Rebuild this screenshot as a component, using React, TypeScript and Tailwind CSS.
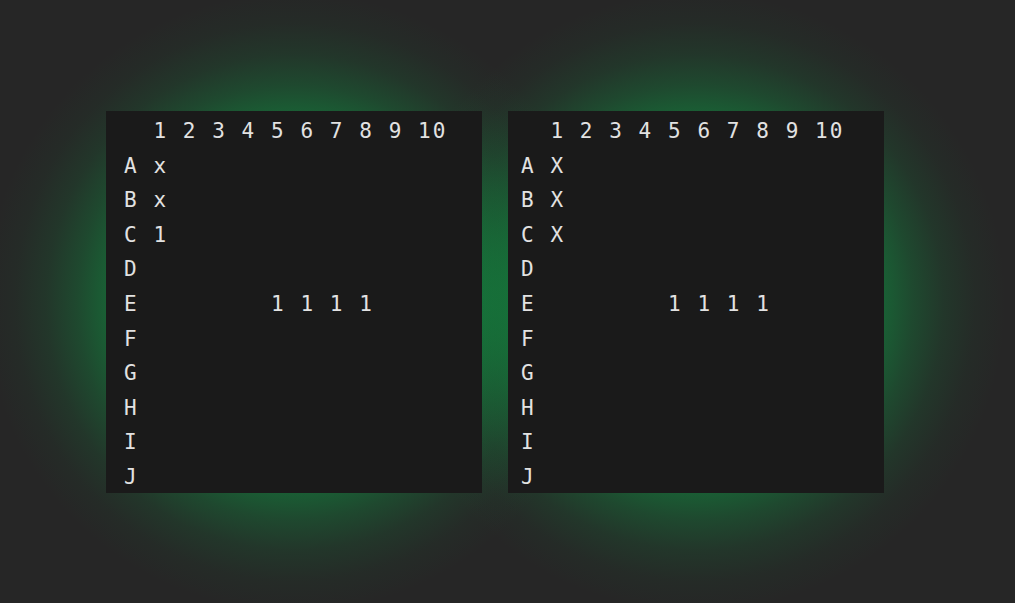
const rows = ['A', 'B', 'C', 'D', 'E', 'F', 'G', 'H', 'I', 'J']

const header = '  1 2 3 4 5 6 7 8 9 10'

function boardLines(marks: Record<string, string>) {
  return [header, ...rows.map((r) => `${r} ${marks[r] ?? ''}`)]
}

const leftBoard = boardLines({ A: 'x', B: 'x', C: '1', E: '        1 1 1 1' })
const rightBoard = boardLines({ A: 'X', B: 'X', C: 'X', E: '        1 1 1 1' })

function Board({ lines, inset }: { lines: string[]; inset: string }) {
  return (
    <div className="relative w-[376px] h-[382px] bg-[#1a1a1a] before:content-[''] before:absolute before:left-1/2 before:top-1/2 before:w-[620px] before:h-[620px] before:-translate-x-1/2 before:-translate-y-1/2 before:-z-10 before:bg-[radial-gradient(circle_closest-side,rgba(16,140,64,0.62)_55%,rgba(16,140,64,0.55)_61%,rgba(16,140,64,0.34)_70%,rgba(16,140,64,0.16)_80%,rgba(16,140,64,0.05)_90%,transparent_100%)]">
      <pre
        className={`${inset} pt-[3px] text-[21px] leading-[34.6px] tracking-[2.06px] text-[#e2e2e2] font-['DejaVu_Sans_Mono','Liberation_Mono',monospace]`}
      >
        {lines.join('\n')}
      </pre>
    </div>
  )
}

export default function App() {
  return (
    <main className="w-[1015px] h-[603px] bg-[#262626] overflow-hidden">
      <div className="isolate flex gap-[26px] pl-[106px] pt-[111px]">
        <Board lines={leftBoard} inset="pl-[18px]" />
        <Board lines={rightBoard} inset="pl-[13px]" />
      </div>
    </main>
  )
}
